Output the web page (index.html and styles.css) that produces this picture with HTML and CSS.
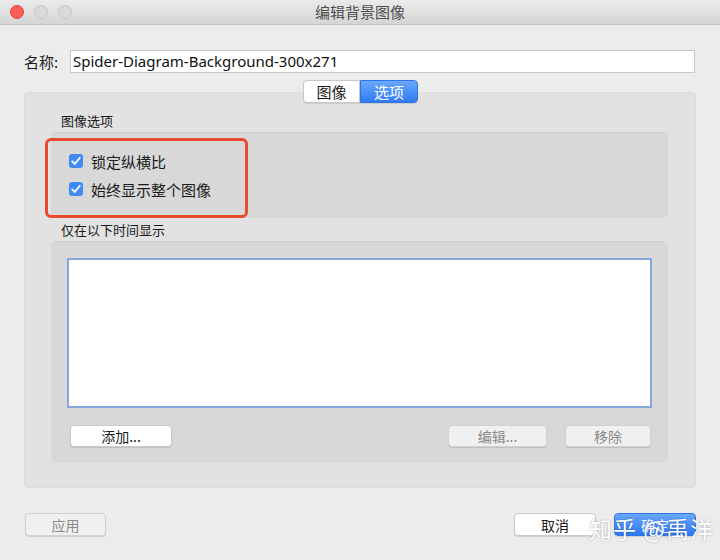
FILE: index.html
```html
<!DOCTYPE html>
<html lang="zh-CN">
<head>
<meta charset="UTF-8">
<meta name="viewport" content="width=device-width, initial-scale=1.0">
<link rel="stylesheet" href="styles.css">
</head>
<body>
  <div class="window">
    <div class="titlebar">
      <div class="lights">
        <span class="light red"></span>
        <span class="light"></span>
        <span class="light"></span>
      </div>
      <div class="title">编辑背景图像</div>
    </div>

    <div class="name-row">
      <label class="name-label">名称:</label>
      <div class="name-input">Spider-Diagram-Background-300x271</div>
    </div>

    <div class="tabs">
      <div class="tab">图像</div>
      <div class="tab active">选项</div>
    </div>

    <div class="panel">
      <div class="group-label">图像选项</div>
      <div class="group group-options">
        <div class="check-row">
          <span class="checkbox"><svg width="14" height="14" viewBox="0 0 14 14"><path d="M3.2 7.4 L5.8 10 L10.8 3.8" fill="none" stroke="#fff" stroke-width="1.8" stroke-linecap="round" stroke-linejoin="round"/></svg></span>
          <span class="check-text">锁定纵横比</span>
        </div>
        <div class="check-row">
          <span class="checkbox"><svg width="14" height="14" viewBox="0 0 14 14"><path d="M3.2 7.4 L5.8 10 L10.8 3.8" fill="none" stroke="#fff" stroke-width="1.8" stroke-linecap="round" stroke-linejoin="round"/></svg></span>
          <span class="check-text">始终显示整个图像</span>
        </div>
        <div class="highlight"></div>
      </div>

      <div class="group-label">仅在以下时间显示</div>
      <div class="group group-time">
        <div class="list"></div>
        <div class="list-buttons">
          <button class="btn btn-add">添加...</button>
          <div class="spacer"></div>
          <button class="btn btn-edit disabled">编辑...</button>
          <button class="btn btn-remove disabled">移除</button>
        </div>
      </div>
    </div>

    <div class="footer">
      <button class="btn btn-apply disabled">应用</button>
      <div class="spacer"></div>
      <button class="btn btn-cancel">取消</button>
      <button class="btn btn-ok">确定</button>
    </div>

    <div class="watermark">知乎 @禹洋</div>
  </div>
</body>
</html>
```

FILE: styles.css
```css
body {
  margin: 0;
  font-family: "Noto Sans CJK SC", "Liberation Sans", sans-serif;
  color: #1a1a1a;
  background-color: #ececec;
}

.window {
  position: relative;
  width: 720px;
  height: 560px;
  background-color: #ececec;
  overflow: hidden;
}

.titlebar {
  height: 24px;
  border-bottom: 1px solid #c4c4c4;
  background: linear-gradient(#ebebeb, #d5d5d5);
  display: flex;
  align-items: center;
  position: relative;
}

.lights {
  display: flex;
  gap: 10px;
  padding-left: 10px;
}

.light {
  width: 12px;
  height: 12px;
  border-radius: 50%;
  background-color: #d9d9d9;
  border: 1px solid #c6c6c6;
}

.light.red {
  background-color: #fc5f57;
  border-color: #e2463f;
}

.title {
  position: absolute;
  left: 0;
  right: 0;
  text-align: center;
  font-size: 15px;
  color: #4d4d4d;
  line-height: 24px;
}

.name-row {
  display: flex;
  align-items: center;
  margin-top: 25px;
  padding: 0 25px 0 24px;
  height: 23px;
}

.name-label {
  font-size: 15px;
  width: 46px;
}

.name-input {
  flex: 1;
  height: 21px;
  background-color: #fff;
  border: 1px solid #c8c8c8;
  font-size: 15px;
  line-height: 21px;
  padding-left: 2px;
  font-family: "Noto Sans", "Noto Sans CJK SC", sans-serif;
  color: #111;
}

.tabs {
  display: flex;
  justify-content: center;
  margin-top: 7px;
  margin-bottom: -11px;
  position: relative;
  z-index: 2;
  padding-left: 1px;
}

.tab {
  width: 55px;
  height: 21px;
  line-height: 21px;
  text-align: center;
  font-size: 15px;
  background-color: #fff;
  border: 1px solid #c8c8c8;
  border-radius: 4px 0 0 4px;
  box-shadow: 0 1px 1px rgba(0, 0, 0, 0.1);
}

.tab.active {
  width: 56px;
  color: #fff;
  background: linear-gradient(#6aa8fa, #2f7bf5);
  border-color: #2f74e8;
  border-radius: 0 4px 4px 0;
}

.panel {
  margin: 0 24px;
  height: 396px;
  box-sizing: border-box;
  padding: 18px 27px 0 26px;
  background-color: #e2e2e2;
  border-radius: 5px;
  border: 1px solid #dcdcdc;
}

.group-label {
  font-size: 13px;
  line-height: 19px;
  padding-left: 10px;
  margin-bottom: 2px;
}

.group {
  position: relative;
  background-color: #d8d8d8;
  border-radius: 5px;
  border-top: 1px solid #d0d0d0;
}

.group-options {
  height: 86px;
  padding: 21px 0 0 18px;
  box-sizing: border-box;
  margin-bottom: 2px;
}

.check-row {
  display: flex;
  align-items: center;
  height: 28px;
  margin-top: -7px;
  margin-bottom: 7px;
}

.checkbox {
  width: 14px;
  height: 14px;
  border-radius: 3px;
  background-color: #3f8af5;
  display: flex;
  margin-right: 8px;
}

.check-text {
  font-size: 15px;
}

.highlight {
  position: absolute;
  left: -6px;
  top: 5px;
  width: 197px;
  height: 74px;
  border: 3px solid #ea4a2f;
  border-radius: 6px;
}

.group-time {
  height: 222px;
  padding: 16px 16px 0 16px;
  box-sizing: border-box;
}

.list {
  height: 146px;
  background-color: #fff;
  border: 2px solid #86a7dc;
}

.list-buttons {
  display: flex;
  gap: 18px;
  margin-top: 17px;
  padding-left: 3px;
  padding-right: 1px;
}

.spacer {
  flex: 1;
}

.btn {
  height: 22px;
  font-family: "Noto Sans CJK SC", "Liberation Sans", sans-serif;
  font-size: 14px;
  line-height: 20px;
  padding: 0;
  background-color: #fff;
  border: 1px solid #c9c9c9;
  border-radius: 4px;
  box-shadow: 0 1px 1px rgba(0, 0, 0, 0.12);
  color: #1a1a1a;
}

.btn.disabled {
  background-color: #f0f0f0;
  color: #8a8a8a;
  border-color: #d2d2d2;
}

.btn-add {
  width: 102px;
}

.btn-edit {
  width: 99px;
}

.btn-remove {
  width: 86px;
}

.footer {
  display: flex;
  gap: 18px;
  padding: 25px 24px 0 25px;
}

.btn-apply {
  width: 81px;
  height: 23px;
}

.btn-cancel {
  width: 82px;
  height: 23px;
}

.btn-ok {
  width: 82px;
  height: 23px;
  color: #fff;
  background: linear-gradient(#69a8fa, #2c78f4);
  border-color: #2f74e8;
}

.watermark {
  position: absolute;
  left: 589px;
  top: 511px;
  font-size: 23px;
  color: #fff;
  letter-spacing: 1px;
  text-shadow: 0 0 2px rgba(0, 0, 0, 0.35);
}
```
